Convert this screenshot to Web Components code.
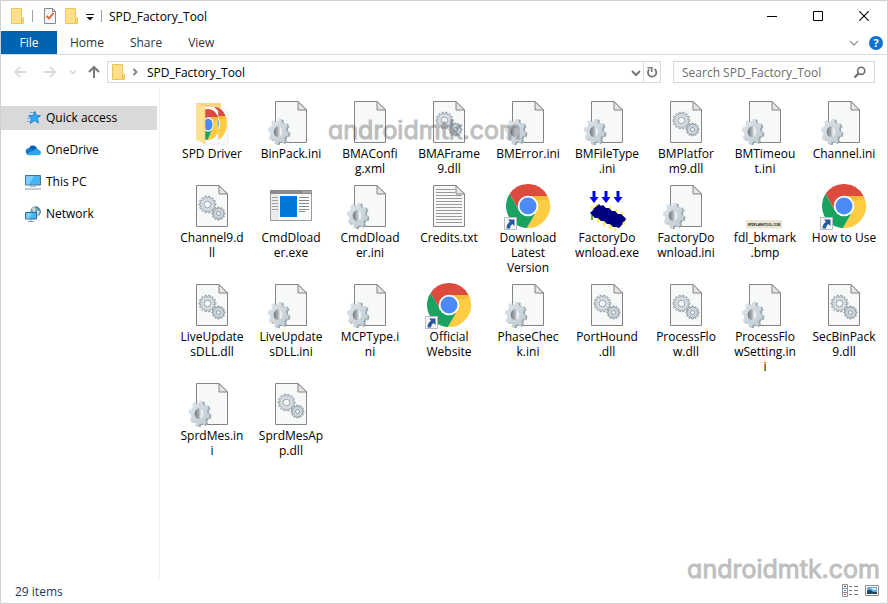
<!DOCTYPE html>
<html lang="en">
<head>
<meta charset="utf-8">
<title>SPD_Factory_Tool</title>
<style>
  body {
    margin: 0;
    color: #000;
    background: #fff;
    font-family: "Open Sans", "Noto Sans", sans-serif;
    font-size: 12px;
  }
</style>
</head>
<body>
<explorer-window>
  <title-bar slot="title" text="SPD_Factory_Tool"></title-bar>
  <ribbon-tabs slot="ribbon"></ribbon-tabs>
  <address-bar slot="address" folder="SPD_Factory_Tool"></address-bar>
  <nav-pane slot="nav">
    <nav-item icon="star" selected>Quick access</nav-item>
    <nav-item icon="cloud">OneDrive</nav-item>
    <nav-item icon="pc">This PC</nav-item>
    <nav-item icon="network">Network</nav-item>
  </nav-pane>
  <file-list slot="files"></file-list>
  <status-bar slot="status">29 items</status-bar>
</explorer-window>

<script>
"use strict";

(() => {
  // outline of a cog, teeth are slightly narrower at the tip
  const cog = (cx, cy, rx, ry, teeth, depth, turn = 0) => {
    const step = Math.PI * 2 / teeth;
    const pts = [];
    for (let i = 0; i < teeth; i++) {
      [[-.3, depth], [-.2, 1], [.2, 1], [.3, depth]].forEach(([a, r]) => {
        const ang = (i + a) * step + turn;
        pts.push(`${(cx + Math.cos(ang) * rx * r).toFixed(2)} ${(cy + Math.sin(ang) * ry * r).toFixed(2)}`);
      });
    }
    return `M${pts.join("L")}Z`;
  };

  const ring = (cx, cy, rx, ry) =>
    `M${cx - rx} ${cy}a${rx} ${ry} 0 1 0 ${rx * 2} 0a${rx} ${ry} 0 1 0 ${-rx * 2} 0Z`;

  const page = `
    <path d="M8.500 2.500H31L39.500 11V43.500H8.500Z" fill="#f7f8f8" stroke="#848484"/>
    <path d="M31 2.500V11H39.500Z" fill="#e4e5e6" stroke="#848484"/>`;

  const folder = `
    <path d="M1.500 1.500H11.500V10L13.500 11V16.500H1.500Z" fill="#ffe08a" stroke="#eac55c"/>
    <path d="M11.500 16V11.500" stroke="#e8b93f" fill="none"/>`;

  const chromeDisc = `
    <path d="M5.540 11.030A22 22 0 0 1 43.600 13L24 13 24 23 15.340 28Z" fill="#dd4b3e"/>
    <path d="M43.600 13A22 22 0 0 1 22.860 44.970L32.660 28 24 23V13Z" fill="#ffcd41"/>
    <path d="M22.860 44.970A22 22 0 0 1 5.540 11.030L15.340 28 24 23 32.660 28Z" fill="#1aa260"/>
    <path d="M24 13H43.600L44.600 16 32 18Z" fill="#e0a020" opacity=".35"/>
    <circle cx="24" cy="23" r="10.300" fill="#fff"/>
    <circle cx="24" cy="23" r="8.500" fill="#4c8bf5"/>`;

  const lines = (x1, x2, y, count, step, color) => {
    let d = "";
    for (let i = 0; i < count; i++) {
      d += `M${x1} ${y + i * step}H${x2}`;
    }
    return `<path d="${d}" stroke="${color}" fill="none"/>`;
  };

  const downArrow = x => `<path d="M${x - 1} 8h3v6h3l-4.500 6-4.500-6h3z" fill="#0000f5"/>`;

  // name: [width, height, markup]
  const icons = {
    folder: [15, 18, folder],
    check: [14, 18, `
      <path d="M1.500 1.500H9.500L12.500 4.500V16.500H1.500Z" fill="#f4f5f6" stroke="#85898d"/>
      <path d="M9.500 1.500V4.500H12.500" fill="none" stroke="#85898d"/>
      <path d="M3.500 9L6 11.500L10.500 6" fill="none" stroke="#f05a28" stroke-width="1.800"/>`],
    customize: [8, 10, `<path d="M0 3.500H8" stroke="#111"/><path d="M.5 6H7.500L4 9.500Z" fill="#111"/>`],
    minimize: [10, 10, `<path d="M0 5.500H10" stroke="#000"/>`],
    maximize: [10, 10, `<path d="M.5.5H9.500V9.500H.5Z" fill="none" stroke="#000"/>`],
    close: [10, 10, `<path d="M.2.2L9.800 9.800M9.800.2L.2 9.800" stroke="#000" stroke-width="1.100"/>`],
    back: [16, 16, `<path d="M14 8H3M8 3L3 8L8 13" fill="none" stroke="#d9dbdc" stroke-width="1.800"/>`],
    forward: [16, 16, `<path d="M2 8H13M8 3L13 8L8 13" fill="none" stroke="#d9dbdc" stroke-width="1.800"/>`],
    recent: [10, 10, `<path d="M2 3.500L5 6.500L8 3.500" fill="none" stroke="#d4d6d8" stroke-width="1.400"/>`],
    up: [16, 16, `<path d="M8 14V3.500M3 8L8 3L13 8" fill="none" stroke="#7b7b7b" stroke-width="2"/>`],
    crumb: [8, 10, `<path d="M2.500 2L5.500 5L2.500 8" fill="none" stroke="#7d7d7d" stroke-width="1.800"/>`],
    down: [12, 10, `<path d="M2 4L6 8L10 4" fill="none" stroke="#777" stroke-width="2"/>`],
    expand: [10, 10, `<path d="M1 3L5 7L9 3" fill="none" stroke="#9a9a9a" stroke-width="1.300"/>`],
    refresh: [12, 14, `
      <path d="M8.500 4A4.200 4.200 0 1 1 3.200 4.500" fill="none" stroke="#777" stroke-width="1.800"/>
      <path d="M1.500 2.800H5.700V7" fill="none" stroke="#777" stroke-width="1.600"/>`],
    search: [14, 14, `
      <circle cx="8.200" cy="5.800" r="3.600" fill="none" stroke="#6f6f6f" stroke-width="1.600"/>
      <path d="M5.600 8.400L1.500 12.500" stroke="#6f6f6f" stroke-width="2.200"/>`],
    star: [16, 16, `
      <path d="M3 5.500H7M2 8.500H6M2 11.500H6M5 2.500H9" stroke="#74aee0"/>
      <path d="M10 1.500L11.300 5.500L15.500 5.600L12.300 8.400L13.500 13L9.500 10.500L5.200 13.500L6.500 8.700L3.700 5.900L8 5.500Z" fill="#31a7f2" stroke="#1c76bd" stroke-width=".8"/>`],
    cloud: [16, 16, `
      <path d="M4 7.500A4 4 0 0 1 11.500 5.500L13 9L7 11L2 9.500Z" fill="#0a5fb5"/>
      <path d="M3.500 13A3.500 3.500 0 0 1 3.200 6.200Q5.500 5.500 7.500 7.500L10 13Z" fill="#1578cf"/>
      <path d="M11.500 6.500A3.200 3.200 0 0 1 14 8Q16 8.500 16 10.800A2.500 2.500 0 0 1 13.500 13.200H3.500A3 3 0 0 1 1.500 12L9.500 7.800Z" fill="#28a8ea"/>`],
    pc: [16, 16, `
      <path d="M.5 1.500H15.500V11H.5Z" fill="#46b4f5" stroke="#3d7592"/>
      <path d="M1 2H9L4 10.500H1Z" fill="#7ccdfb"/>
      <path d="M5 12.500H11" stroke="#9fb4c0"/>
      <path d="M0 15H16" stroke="#8d9ba3"/>`],
    network: [16, 16, `
      <circle cx="10.500" cy="5.500" r="5.200" fill="#6f9dbd"/>
      <path d="M7 2.500Q10 0 10.500 3T8 6ZM12 5L15 4V8L12 10Z" fill="#c6e0d4"/>
      <path d="M10.500.8A5 5 0 0 1 14 9" stroke="#3d7592" fill="none"/>
      <path d="M.5 6.500H11.500V13H.5Z" fill="#46b4f5" stroke="#2f6d92"/>
      <path d="M1 7H7L4 12.500H1Z" fill="#7ccdfb"/>
      <path d="M3 15.500H9" stroke="#8d9ba3"/><path d="M6 13V15" stroke="#8d9ba3"/>`],
    details: [16, 14, `
      <path d="M.5.5H5.500V12.500H.5ZM.5 4.500H5.500M.5 8.500H5.500" fill="#fff" stroke="#8e8e8e"/>
      <path d="M2 2H4V3H2Z" fill="#444"/><path d="M2 6H4V7H2Z" fill="#2a8de0"/><path d="M2 10H4V11H2Z" fill="#e03c31"/>
      <path d="M7 2.500H10M12 2.500H16M7 6.500H10M12 6.500H16M7 10.500H10M12 10.500H16" stroke="#777"/>`],
    thumbs: [14, 12, `
      <path d="M.5.5H13.500V10.500H.5Z" fill="#fff" stroke="#8e8e8e"/>
      <path d="M2 2H12V9H2Z" fill="#5fb0ea"/><path d="M2 6Q5 3 8 7L12 7V9H2Z" fill="#24455a"/><path d="M6 3H11V5H8Z" fill="#d9effb"/>`],

    // 48px file icons
    ini: [48, 48, `
      <defs>
        <linearGradient id="hole"><stop offset="0" stop-color="#70777d"/><stop offset=".45" stop-color="#a5abb0"/><stop offset=".8" stop-color="#eff1f2"/></linearGradient>
        <linearGradient id="face" x2="1" y2="1"><stop offset="0" stop-color="#dfe7ec"/><stop offset="1" stop-color="#bcc8d0"/></linearGradient>
      </defs>
      ${page}
      <path d="${cog(13, 33.300, 10.500, 13, 8, .8, .2)}" fill="#9ba7b0"/>
      <path d="${cog(11.200, 32.700, 10.500, 13, 8, .8, .2)}" fill="url(#face)"/>
      <ellipse cx="11" cy="32.700" rx="4.300" ry="5.400" fill="url(#hole)"/>`],
    dll: [48, 48, `
      ${page}
      <path d="${cog(19.500, 21.500, 8.500, 8.500, 14, .8)}${ring(19.500, 21.500, 3.300, 3.300)}" fill="#d5dce1" fill-rule="evenodd" stroke="#8d979e" stroke-width=".8"/>
      <path d="${cog(30.500, 30.500, 6.500, 6.500, 12, .77)}${ring(30.500, 30.500, 2, 2)}" fill="#ccd5db" fill-rule="evenodd" stroke="#828d95" stroke-width=".8"/>`],
    xml: [48, 48, page],
    txt: [48, 48, page + lines(11, 30, 6.500, 2, 3, "#999") + lines(11, 37, 12.500, 10, 3, "#999")],
    exe: [48, 48, `
      <path d="M3.500 7.500H44.500V37.500H3.500Z" fill="#fafafa" stroke="#9a9a9a"/>
      <path d="M3 7H45V11H3Z" fill="#8b8b8b"/>
      <path d="M36 9H38M39 9H41M42 9H44" stroke="#ddd"/>
      <path d="M4 11H12V37H4Z" fill="#ececec"/>
      ${lines(5, 11, 14.500, 5, 3, "#a0a0a0")}
      <path d="M13 13H30V34H13Z" fill="#0078d7"/>
      ${lines(32, 42, 14.500, 5, 3, "#8a8a8a")}${lines(32, 38, 28.500, 1, 3, "#8a8a8a")}`],
    chrome: [48, 48, `
      ${chromeDisc}
      <path d="M.5 34.500H12.500V46.500H.5Z" fill="#f6f7f8" stroke="#b9bcc0"/>
      <path d="M4 36.500H10.500V43L8.300 41Q6 42.500 6 45.500H2.500Q2.500 41 6 38.800Z" fill="#28589c"/>`],
    chip: [48, 48, `
      ${downArrow(10.500)}${downArrow(22.500)}${downArrow(34.500)}
      <path d="M9 26V23M14 24V21M27 27V23M33 29V26M39 32V29M9 32V37M15 35V40M21 38V43M27 41V46M32 43V48M41 38V42" stroke="#f6f000" stroke-width="1.300"/>
      <path d="M9 32V37" stroke="#13803a" stroke-width="1.300"/>
      <path d="M16 21L18 23L20 22L23 25L26 25L29 28L32 28L35 31L38 31L43 35.500L42 38L40 39L39 42L36 45L33 44L30 44L27 41L24 41L21 38L18 38L15 35L12 35L7 30L10 27L11 25L14 23Z" fill="#000080"/>`],
    bmp: [48, 48, `
      <path d="M5 37H41V45.500H5Z" fill="#e9e6d3"/>
      <text x="23" y="42.500" text-anchor="middle" font-family="Liberation Sans" font-weight="bold" font-size="3" fill="#111">SPDFLASHTOOL.COM</text>`],
    driver: [48, 48, `
      <path d="M8 4H33V40H8Z" fill="#f6d67c"/>
      <path d="M24 9H34L40 14V45H24Z" fill="#fbfbfb" stroke="#e1e1e1" stroke-width=".6"/>
      <svg x="14" y="8" width="25" height="33" viewBox="2 1 44 44" preserveAspectRatio="none">${chromeDisc}</svg>
      <path d="M15 8H26L30 12V45H15Z" fill="#fdfdfd" stroke="#e1e1e1" stroke-width=".6"/>
      <svg x="15" y="10" width="15" height="31" viewBox="14 1 29 44" preserveAspectRatio="none">${chromeDisc}</svg>
      <path d="M8 4L17 9V45L8 41Z" fill="#ffe194"/>
      <path d="M17 9V45" stroke="#ecc766" stroke-width=".7"/>`]
  };

  const define = (name, markup, setup) => {
    customElements.define(name, class extends HTMLElement {
      constructor() {
        super();
        this.attachShadow({mode: "open"}).innerHTML = `
          <style>
            *, :host { box-sizing: border-box; }
            button {
              display: flex;
              align-items: center;
              justify-content: center;
              margin: 0;
              padding: 0;
              border: 0;
              background: none;
              color: inherit;
              font: inherit;
            }
          </style>${markup}`;
      }

      connectedCallback() {
        if (setup) {
          setup(this, this.shadowRoot);
        }
      }
    });
  };

  const makeIcon = name => {
    const icon = document.createElement("x-icon");
    icon.setAttribute("name", name);
    return icon;
  };

  define("x-icon", `
    <style>
      :host { display: block; flex: none; }
      svg { display: block; }
    </style>
    <div id="art"></div>`, (host, root) => {
    const [w, h, art] = icons[host.getAttribute("name")];
    root.getElementById("art").innerHTML =
      `<svg width="${w}" height="${h}" viewBox="0 0 ${w} ${h}" aria-hidden="true">${art}</svg>`;
  });

  define("title-bar", `
    <style>
      :host { display: flex; height: 30px; align-items: center; padding-left: 9px; }
      .sep { width: 1px; height: 12px; background: #a0a0a0; }
      #quick { display: flex; align-items: center; gap: 7px; }
      #quick .first { margin-right: 3px; }
      #text { flex: 1; padding-left: 7px; }
      #controls { display: flex; align-self: stretch; }
      #controls button { width: 46px; }
    </style>
    <div id="quick">
      <x-icon name="folder"></x-icon>
      <div class="sep first"></div>
      <button aria-label="Properties"><x-icon name="check"></x-icon></button>
      <button aria-label="New folder"><x-icon name="folder"></x-icon></button>
      <button aria-label="Customize"><x-icon name="customize"></x-icon></button>
      <div class="sep"></div>
    </div>
    <div id="text"></div>
    <div id="controls">
      <button aria-label="Minimize"><x-icon name="minimize"></x-icon></button>
      <button aria-label="Maximize"><x-icon name="maximize"></x-icon></button>
      <button aria-label="Close"><x-icon name="close"></x-icon></button>
    </div>`, (host, root) => {
    root.getElementById("text").textContent = host.getAttribute("text");
  });

  define("ribbon-tabs", `
    <style>
      :host { display: flex; height: 24px; border-bottom: 1px solid #dadbdc; color: #333; }
      #tabs { display: flex; flex: 1; }
      #tabs button { padding: 0 13px; }
      #tabs .file { width: 56px; background: #0063b1; color: #fff; }
      #side { display: flex; align-items: center; gap: 10px; padding-right: 4px; }
      #help { width: 14px; height: 14px; border-radius: 50%; background: #0b71ce; color: #fff; font-size: 11px; font-weight: bold; line-height: 14px; }
    </style>
    <div id="tabs">
      <button class="file">File</button>
      <button>Home</button>
      <button>Share</button>
      <button>View</button>
    </div>
    <div id="side">
      <button aria-label="Expand ribbon"><x-icon name="expand"></x-icon></button>
      <button id="help">?</button>
    </div>`);

  define("address-bar", `
    <style>
      :host { display: flex; align-items: center; padding: 6px 12px 6px 4px; }
      .arrow { padding: 0 7px; }
      .recent { padding: 0 3px; }
      .up { padding: 0 5px; }
      .box { display: flex; align-items: center; height: 22px; border: 1px solid #d9d9d9; }
      #path { flex: 1; padding-left: 3px; }
      #crumb { flex: 1; justify-content: flex-start; padding-left: 8px; }
      #path .sub { margin-left: 5px; }
      #refresh { width: 17px; height: 20px; margin-left: 1px; border-left: 1px solid #d9d9d9; }
      #find { width: 202px; margin-left: 12px; padding: 0 7px 0 8px; }
      input { flex: 1; min-width: 0; padding: 0; border: 0; outline: 0; background: none; font: inherit; }
      input::placeholder { color: #6d6d6d; opacity: 1; }
    </style>
    <button class="arrow" aria-label="Back"><x-icon name="back"></x-icon></button>
    <button class="arrow" aria-label="Forward"><x-icon name="forward"></x-icon></button>
    <button class="recent" aria-label="Recent locations"><x-icon name="recent"></x-icon></button>
    <button class="up" aria-label="Up"><x-icon name="up"></x-icon></button>
    <div id="path" class="box">
      <x-icon name="folder"></x-icon>
      <x-icon class="sub" name="crumb"></x-icon>
      <button id="crumb"></button>
      <button aria-label="Previous locations"><x-icon name="down"></x-icon></button>
      <button id="refresh" aria-label="Refresh"><x-icon name="refresh"></x-icon></button>
    </div>
    <label id="find" class="box">
      <input type="text" aria-label="Search">
      <x-icon name="search"></x-icon>
    </label>`, (host, root) => {
    const name = host.getAttribute("folder");
    root.getElementById("crumb").textContent = name;
    root.querySelector("input").placeholder = `Search ${name}`;
  });

  define("nav-pane", `
    <style>
      :host { display: block; }
      nav { display: flex; flex-direction: column; gap: 8px; padding: 17px 2px 0 0; }
    </style>
    <nav><slot></slot></nav>`);

  define("nav-item", `
    <style>
      :host { display: block; }
      a { display: flex; align-items: center; gap: 5px; height: 24px; padding-left: 24px; color: inherit; text-decoration: none; }
      #label { padding-bottom: 2px; }
      :host([selected]) a { background: #d9d9d9; }
    </style>
    <a href="#"><span id="label"><slot></slot></span></a>`, (host, root) => {
    root.querySelector("a").prepend(makeIcon(host.getAttribute("icon")));
  });

  define("file-tile", `
    <style>
      :host { display: block; }
      button { flex-direction: column; justify-content: flex-start; width: 100%; }
      #art { height: 47px; }
      #label { min-height: 30px; padding-bottom: 1px; line-height: 15px; white-space: pre; text-align: center; }
    </style>
    <button><span id="art"></span><span id="label"><slot></slot></span></button>`, (host, root) => {
    root.getElementById("art").replaceChildren(makeIcon(host.getAttribute("icon")));
  });

  const files = [
    ["driver", "SPD Driver"],
    ["ini", "BinPack.ini"],
    ["xml", "BMAConfi\ng.xml"],
    ["dll", "BMAFrame\n9.dll"],
    ["ini", "BMError.ini"],
    ["ini", "BMFileType\n.ini"],
    ["dll", "BMPlatfor\nm9.dll"],
    ["ini", "BMTimeou\nt.ini"],
    ["ini", "Channel.ini"],
    ["dll", "Channel9.d\nll"],
    ["exe", "CmdDload\ner.exe"],
    ["ini", "CmdDload\ner.ini"],
    ["txt", "Credits.txt"],
    ["chrome", "Download\nLatest\nVersion"],
    ["chip", "FactoryDo\nwnload.exe"],
    ["ini", "FactoryDo\nwnload.ini"],
    ["bmp", "fdl_bkmark\n.bmp"],
    ["chrome", "How to Use"],
    ["dll", "LiveUpdate\nsDLL.dll"],
    ["ini", "LiveUpdate\nsDLL.ini"],
    ["ini", "MCPType.i\nni"],
    ["chrome", "Official\nWebsite"],
    ["ini", "PhaseChec\nk.ini"],
    ["dll", "PortHound\n.dll"],
    ["dll", "ProcessFlo\nw.dll"],
    ["ini", "ProcessFlo\nwSetting.in\ni"],
    ["dll", "SecBinPack\n9.dll"],
    ["ini", "SprdMes.in\ni"],
    ["dll", "SprdMesAp\np.dll"]
  ];

  define("file-list", `
    <style>
      :host { display: block; padding: 10px 0 0 13px; }
      #grid { display: grid; grid-template-columns: repeat(auto-fill, 78px); gap: 6px 1px; }
    </style>
    <div id="grid"></div>`, (host, root) => {
    const grid = root.getElementById("grid");
    files.forEach(([icon, name]) => {
      const tile = document.createElement("file-tile");
      tile.setAttribute("icon", icon);
      tile.textContent = name;
      grid.append(tile);
    });
  });

  define("status-bar", `
    <style>
      :host { display: flex; align-items: center; height: 24px; padding: 0 8px 0 14px; color: #1e395b; }
      #count { flex: 1; }
      #views { display: flex; gap: 7px; }
    </style>
    <span id="count"><slot></slot></span>
    <div id="views">
      <button aria-label="Details"><x-icon name="details"></x-icon></button>
      <button aria-label="Large icons"><x-icon name="thumbs"></x-icon></button>
    </div>`);

  define("water-mark", `
    <style>
      :host {
        color: #505050;
        opacity: .36;
        font-family: Inter, sans-serif;
        font-size: 25px;
        font-feature-settings: "cv11";
        line-height: 30px;
        -webkit-text-stroke: 1px #505050;
        pointer-events: none;
      }
    </style>
    <slot></slot>`);

  define("explorer-window", `
    <style>
      :host { display: flex; flex-direction: column; min-height: 100vh; border: 1px solid #d0d0d0; }
      main { position: relative; display: grid; grid-template-columns: 158px 1fr; flex: 1; }
      #files { border-left: 1px solid #f0f0f0; }
      water-mark { position: absolute; }
      .top { left: 327px; top: 26px; }
      .bottom { right: 7px; bottom: -5px; }
    </style>
    <slot name="title"></slot>
    <slot name="ribbon"></slot>
    <slot name="address"></slot>
    <main>
      <slot name="nav"></slot>
      <div id="files"><slot name="files"></slot></div>
      <water-mark class="top">androidmtk.com</water-mark>
      <water-mark class="bottom">androidmtk.com</water-mark>
    </main>
    <slot name="status"></slot>`);
})();
</script>
</body>
</html>
